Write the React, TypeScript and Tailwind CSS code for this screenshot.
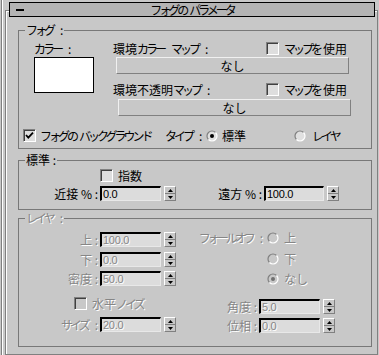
import type { ReactNode } from "react"

// Disabled text: classic embossed gray
const dis = "text-[#868686] [text-shadow:1px_1px_0_#ffffff]"

// Katakana runs are drawn tighter, like the proportional UI font in the original
function J({ children }: { children: string }) {
  const parts = children.split(/([\u30A0-\u30FF]+)/)
  return (
    <>
      {parts.map((p, i) =>
        i % 2 ? (
          <span key={i} className="tracking-[-3px]">
            {p}
          </span>
        ) : parts[i - 1] && p.startsWith(" ") ? (
          <span key={i} className="pl-[7px]">
            {p.trimStart()}
          </span>
        ) : (
          p
        )
      )}
    </>
  )
}

function Check({ checked = false, disabled = false }: { checked?: boolean; disabled?: boolean }) {
  return (
    <span
      className={`flex h-[13px] w-[13px] shrink-0 items-center justify-center border border-t-[#808080] border-l-[#808080] border-b-white border-r-white shadow-[inset_1px_1px_0_#404040] ${
        disabled ? "bg-[#c8c8c8]" : "bg-[#dedede]"
      }`}
    >
      {checked && (
        <svg width="9" height="9" viewBox="0 0 9 9">
          <path d="M1 4 L3.3 6.6 L8 1.6" stroke="#000" strokeWidth="1.8" fill="none" />
        </svg>
      )}
    </span>
  )
}

function Radio({ checked = false, disabled = false }: { checked?: boolean; disabled?: boolean }) {
  return (
    <svg width="12" height="12" viewBox="0 0 12 12" className="shrink-0">
      <circle cx="6" cy="6" r="5" fill={disabled ? "#c8c8c8" : "#e0e0e0"} />
      <path d="M2.46 9.54 A5 5 0 0 1 9.54 2.46" stroke="#808080" strokeWidth="1.2" fill="none" />
      <path d="M9.54 2.46 A5 5 0 0 1 2.46 9.54" stroke="#ffffff" strokeWidth="1.2" fill="none" />
      {checked && <circle cx="6" cy="6" r="2" fill={disabled ? "#707070" : "#000"} />}
    </svg>
  )
}

function Spin({ className = "" }: { className?: string }) {
  return (
    <span
      className={`flex h-[15px] w-[12px] shrink-0 flex-col border border-t-white border-l-white border-b-[#808080] border-r-[#808080] ${className}`}
    >
      <span className="flex flex-1 items-center justify-center border-b border-b-[#808080]">
        <svg width="5" height="3" viewBox="0 0 5 3">
          <path d="M0 3 L2.5 0 L5 3Z" fill="#000" />
        </svg>
      </span>
      <span className="flex flex-1 items-center justify-center">
        <svg width="5" height="3" viewBox="0 0 5 3">
          <path d="M0 0 L5 0 L2.5 3Z" fill="#000" />
        </svg>
      </span>
    </span>
  )
}

function Field({ value, w, disabled = false }: { value: string; w: string; disabled?: boolean }) {
  return (
    <span
      className={`flex h-[15px] shrink-0 items-center border-t-2 border-l-2 border-b border-r border-t-black border-l-black border-b-[#e8e8e8] border-r-[#e8e8e8] bg-[#dcdcdc] pl-[1px] font-['Liberation_Sans',sans-serif] text-[11px] tracking-[-0.3px] ${w} ${
        disabled ? dis : ""
      }`}
    >
      {value}
    </span>
  )
}

function Button({ label, className = "" }: { label: string; className?: string }) {
  return (
    <div
      className={`flex h-[17px] w-[233px] items-center justify-center border border-t-[#f0f0f0] border-l-[#f0f0f0] border-b-[#808080] border-r-[#808080] ${className}`}
    >
      {label}
    </div>
  )
}

function Group({
  label,
  disabled = false,
  className,
  children,
}: {
  label: string
  disabled?: boolean
  className: string
  children: ReactNode
}) {
  return (
    <div className={`relative ml-[12px] w-[354px] shrink-0 border border-[#787878] ${className}`}>
      <span className={`absolute -top-[7px] left-[6px] bg-[#c8c8c8] px-[1px] ${disabled ? dis : ""}`}>
        <J>{label}</J>
      </span>
      {children}
    </div>
  )
}

export default function App() {
  return (
    <div className="flex h-[355px] w-[379px] overflow-hidden whitespace-nowrap bg-[#c8c8c8] font-['Noto_Sans_CJK_JP','Noto_Sans_CJK_SC',sans-serif] text-[12px] leading-[12px] text-black">
      <div className="ml-[1px] h-full w-[2px] shrink-0 border-l border-l-[#808080] bg-white" />

      {/* Rollout frame */}
      <div className="ml-[2px] mt-[10px] flex h-[345px] w-[373px] shrink-0 flex-col border border-[#808080] shadow-[inset_1px_1px_0_#ffffff]">
        {/* Title bar */}
        <div className="-mt-[9px] ml-[3px] flex h-[15px] w-[366px] shrink-0 items-center border border-black bg-[#b4b4b4]">
          <div className="w-[24px] pl-[6px]">
            <span className="block h-[2px] w-[8px] bg-black" />
          </div>
          <div className="flex-1 text-center">
            <J>フォグのパラメータ</J>
          </div>
          <div className="w-[24px]" />
        </div>

        {/* Fog */}
        <Group label="フォグ :" className="mt-[13px] h-[119px]">
          <div className="flex pl-[15px] pt-[11px]">
            <div className="w-[79px]">
              <div className="flex h-[13px] items-center">
                <J>カラー :</J>
              </div>
              <div className="mt-[2px] h-[36px] w-[60px] border border-black bg-white" />
            </div>
            <div>
              <div className="flex h-[13px] items-center">
                <span className="w-[153px]">
                  <J>環境カラー マップ :</J>
                </span>
                <Check />
                <span className="ml-[5px]">
                  <J>マップを使用</J>
                </span>
              </div>
              <Button label="なし" className="ml-[3px] mt-[2px]" />
              <div className="mt-[9px] flex h-[13px] items-center">
                <span className="w-[153px]">
                  <J>環境不透明マップ :</J>
                </span>
                <Check />
                <span className="ml-[5px]">
                  <J>マップを使用</J>
                </span>
              </div>
              <Button label="なし" className="ml-[5px] mt-[3px]" />
            </div>
          </div>
          <div className="mt-[13px] flex h-[13px] items-center pl-[4px]">
            <div className="flex w-[142px] items-center">
              <Check checked />
              <span className="ml-[4px]">
                <J>フォグのバックグラウンド</J>
              </span>
            </div>
            <span className="w-[41px]">
              <J>タイプ :</J>
            </span>
            <div className="flex w-[88px] items-center">
              <Radio checked />
              <span className="ml-[4px]">標準</span>
            </div>
            <div className="flex items-center">
              <Radio />
              <span className="ml-[6px]">
                <J>レイヤ</J>
              </span>
            </div>
          </div>
        </Group>

        {/* Standard */}
        <Group label="標準 :" className="mt-[11px] h-[50px]">
          <div className="mt-[8px] flex h-[13px] items-center pl-[81px]">
            <Check />
            <span className="ml-[5px]">指数</span>
          </div>
          <div className="mt-[4px] flex h-[15px] items-center">
            <span className="flex w-[81px] justify-end pr-[2px]">近接 % :</span>
            <Field w="w-[61px]" value="0.0" />
            <Spin className="ml-[3px]" />
            <span className="flex w-[88px] justify-end pr-[2px]">遠方 % :</span>
            <Field w="w-[60px]" value="100.0" />
            <Spin className="ml-[3px]" />
          </div>
        </Group>

        {/* Layered (disabled) */}
        <Group label="レイヤ :" disabled className="mt-[8px] h-[129px]">
          <div className={`flex ${dis}`}>
            <div className="w-[181px] pt-[13px]">
              <div className="flex h-[15px] items-center">
                <span className="flex w-[81px] justify-end pr-[2px]">上 :</span>
                <Field w="w-[61px]" value="100.0" disabled />
                <Spin className="ml-[3px]" />
              </div>
              <div className="mt-[5px] flex h-[15px] items-center">
                <span className="flex w-[81px] justify-end pr-[2px]">下 :</span>
                <Field w="w-[61px]" value="0.0" disabled />
                <Spin className="ml-[3px]" />
              </div>
              <div className="mt-[4px] flex h-[15px] items-center">
                <span className="flex w-[81px] justify-end pr-[2px]">密度 :</span>
                <Field w="w-[61px]" value="50.0" disabled />
                <Spin className="ml-[3px]" />
              </div>
              <div className="mt-[11px] flex h-[13px] items-center pl-[55px]">
                <Check disabled />
                <span className="ml-[5px]">
                  <J>水平ノイズ</J>
                </span>
              </div>
              <div className="mt-[7px] flex h-[15px] items-center">
                <span className="flex w-[81px] justify-end pr-[2px]">
                  <J>サイズ :</J>
                </span>
                <Field w="w-[61px]" value="20.0" disabled />
                <Spin className="ml-[3px]" />
              </div>
            </div>

            <div className="pt-[12px]">
              <div className="flex h-[13px] items-center">
                <span className="flex w-[67px] justify-end pr-[4px]">
                  <J>フォールオフ :</J>
                </span>
                <Radio disabled />
                <span className="ml-[5px]">上</span>
              </div>
              <div className="mt-[8px] flex h-[13px] items-center pl-[67px]">
                <Radio disabled />
                <span className="ml-[5px]">下</span>
              </div>
              <div className="mt-[7px] flex h-[13px] items-center pl-[67px]">
                <Radio checked disabled />
                <span className="ml-[5px]">なし</span>
              </div>
              <div className="mt-[14px] flex h-[15px] items-center">
                <span className="flex w-[59px] justify-end pr-[2px]">角度 :</span>
                <Field w="w-[61px]" value="5.0" disabled />
                <Spin className="ml-[3px]" />
              </div>
              <div className="mt-[4px] flex h-[15px] items-center">
                <span className="flex w-[59px] justify-end pr-[2px]">位相 :</span>
                <Field w="w-[61px]" value="0.0" disabled />
                <Spin className="ml-[3px]" />
              </div>
            </div>
          </div>
        </Group>
      </div>
    </div>
  )
}
